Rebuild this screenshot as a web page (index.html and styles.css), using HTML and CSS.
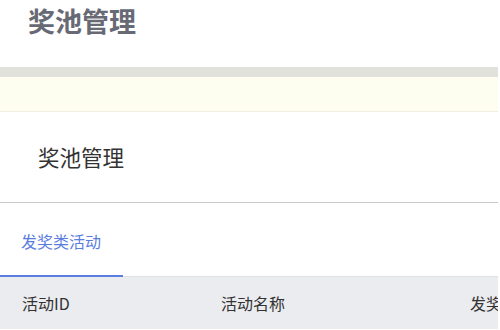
FILE: index.html
```html
<!DOCTYPE html>
<html lang="zh-CN">
<head>
  <meta charset="UTF-8" />
  <title>奖池管理</title>
  <link rel="stylesheet" href="styles.css">
</head>
<body>
  <div class="page">
    <header class="top">
      <h1>奖池管理</h1>
    </header>
    <div class="band"></div>
    <div class="notice"></div>

    <section class="panel">
      <h2 class="panel-title">奖池管理</h2>
    </section>

    <!-- tabs -->
    <nav class="tabs">
      <span class="tab active">发奖类活动</span>
    </nav>

    <table class="grid">
      <thead>
        <tr>
          <th class="c-id">活动ID</th>
          <th class="c-name">活动名称</th>
          <th class="c-prize">发奖类型</th>
        </tr>
      </thead>
    </table>
  </div>
</body>
</html>
```

FILE: styles.css
```css
body {margin:0; padding:0; font-family:"Noto Sans CJK SC", "Liberation Sans", sans-serif; background:#fff; overflow:hidden;}
.page {width:498px;}

.top {height:67px; padding-left:28px; box-sizing:border-box;}
.top h1 {margin:0; padding-top:2px; font-size:27px; font-weight:bold; color:#676a74; line-height:38px;}

.band {height:10px; background:#e2e2dd;}
.notice {height:34px; background:#fefef0; border-bottom:1px solid #f1efe0;}

.panel {height:91px; border-bottom:1px solid #c8c8c8; display:flex; align-items:center; padding-left:38px; box-sizing:border-box;}
.panel-title {margin:0; font-size:21.5px; font-weight:normal; color:#333; line-height:30px;}

/* tabs */
.tabs {height:74px; display:flex; align-items:flex-end; border-bottom:1px solid #e2e2e2; box-sizing:border-box;}
.tab {width:123px; box-sizing:border-box; padding-left:21px; font-size:16px; color:#5a7ee0; line-height:24px; padding-bottom:22px; margin-bottom:-1px;}
.tab.active {border-bottom:2px solid #5a7ee0;}

.grid {width:100%; border-collapse:collapse; table-layout:fixed;}
.grid th {background:#ebecf0; font-weight:normal; font-size:16px; color:#333; text-align:left; height:52px; padding:0; white-space:nowrap; overflow:hidden;}
.c-id {width:221px; padding-left:22px !important; box-sizing:border-box;}
.c-name {width:249px;}
```
